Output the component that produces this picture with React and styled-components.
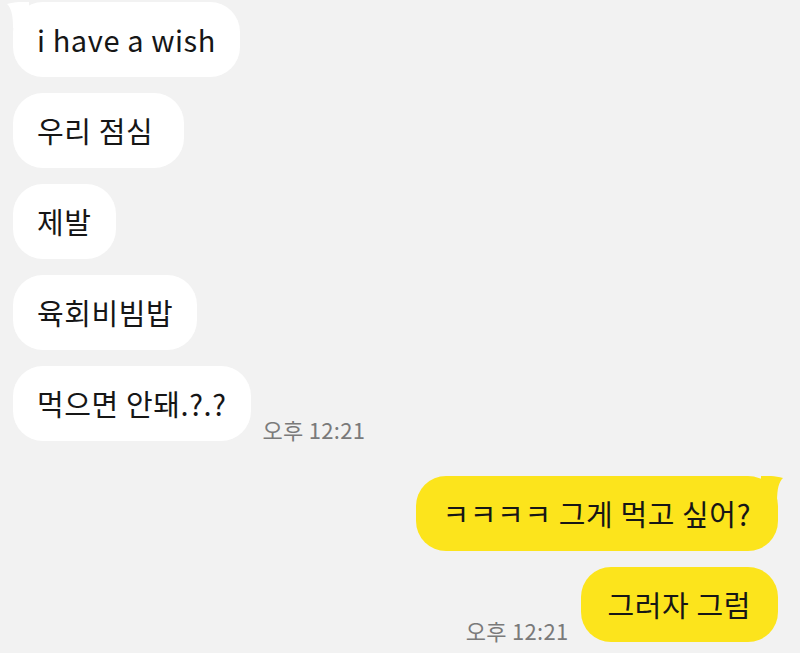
import React from "react";
import styled, { createGlobalStyle } from "styled-components";

const Global = createGlobalStyle`
  html, body { margin: 0; padding: 0; background: #f2f2f2; }
  body { font-family: "Noto Sans CJK KR", "Noto Sans", sans-serif; }
`;

const Chat = styled.div`
  width: 800px;
  height: 653px;
  box-sizing: border-box;
  padding: 2px 22px 0 13px;
  display: flex;
  flex-direction: column;
  overflow: hidden;
`;

const Group = styled.div`
  display: flex;
  flex-direction: column;
  align-items: ${(p) => (p.$mine ? "flex-end" : "flex-start")};
  gap: 16px;
  margin-top: ${(p) => (p.$mine ? "35px" : "0")};
`;

const Row = styled.div`
  display: flex;
  flex-direction: ${(p) => (p.$mine ? "row-reverse" : "row")};
  align-items: flex-end;
  gap: 12px;
`;

const Bubble = styled.div`
  position: relative;
  box-sizing: border-box;
  height: 75px;
  padding: 0 ${(p) => (p.$mine ? "27px" : "24px")} 2px;
  display: flex;
  align-items: center;
  border-radius: 30px;
  background: ${(p) => (p.$mine ? "#fce41c" : "#ffffff")};
  color: #161616;
  font-size: 29px;
  letter-spacing: 0.6px;
  white-space: pre;
`;

const Tail = styled.svg`
  position: absolute;
  top: 0;
  ${(p) => (p.$mine ? "right: -5px; transform: scaleX(-1);" : "left: -6px;")}
  width: 22px;
  height: 26px;
`;

const Time = styled.span`
  font-size: 22px;
  letter-spacing: 0.3px;
  color: #7a7a7a;
  line-height: 1;
  padding-bottom: 1px;
  white-space: nowrap;
`;

function TailShape({ mine }) {
  return (
    <Tail $mine={mine} viewBox="0 0 22 26">
      <path
        d="M22 0 L12 0 C 8 0, 4 1, 0 2 C 4 6, 6 12, 6 26 L22 26 Z"
        fill={mine ? "#fce41c" : "#ffffff"}
      />
    </Tail>
  );
}

const theirs = ["i have a wish", "우리 점심 ", "제발", "육회비빔밥", "먹으면 안돼.?.?"];
const mine = ["ㅋㅋㅋㅋ 그게 먹고 싶어?", "그러자 그럼"];

export default function App() {
  return (
    <>
      <Global />
      <Chat>
        <Group>
          {theirs.map((t, i) => (
            <Row key={i}>
              <Bubble>
                {i === 0 && <TailShape />}
                {t}
              </Bubble>
              {i === theirs.length - 1 && <Time>오후 12:21</Time>}
            </Row>
          ))}
        </Group>
        <Group $mine>
          {mine.map((t, i) => (
            <Row key={i} $mine>
              <Bubble $mine>
                {i === 0 && <TailShape mine />}
                {t}
              </Bubble>
              {i === mine.length - 1 && <Time>오후 12:21</Time>}
            </Row>
          ))}
        </Group>
      </Chat>
    </>
  );
}
